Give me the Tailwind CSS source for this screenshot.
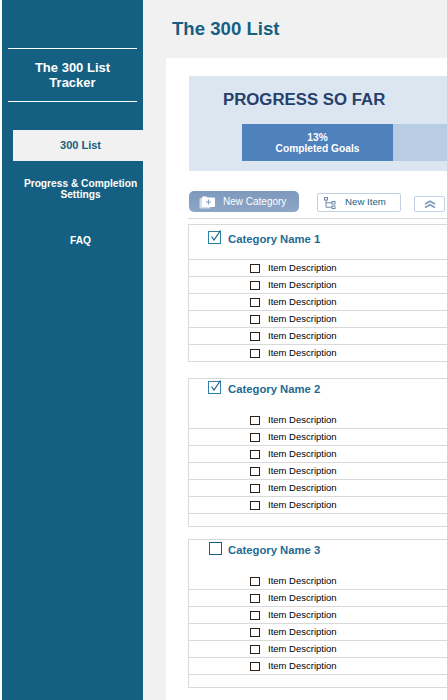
<!DOCTYPE html>
<html lang="en">
<head>
<meta charset="UTF-8">
<meta name="viewport" content="width=device-width,initial-scale=1">
<title>The 300 List</title>
<script src="https://cdn.jsdelivr.net/npm/@tailwindcss/browser@4"></script>
</head>
<body class="bg-white font-['Liberation_Sans',Arial,sans-serif]">
<div class="flex w-[447px] h-[700px] overflow-hidden pl-[2px]">

  <!-- sidebar -->
  <aside class="w-[141px] shrink-0 bg-[#155f82] text-white text-center">
    <div class="mx-[6px] mt-[48px] h-[54px] border-y border-white flex items-center justify-center pb-px text-[13px] leading-[15px] font-bold">The 300 List<br>Tracker</div>
    <div class="mt-[28px] ml-[11px] pl-[5px] h-[31px] bg-[#f1f1f1] text-[#155f82] text-[11px] font-bold flex items-center justify-center">300 List</div>
    <div class="mt-[17px] ml-[16px] text-[10.2px] leading-[11px] font-bold">Progress &amp; Completion<br>Settings</div>
    <div class="mt-[35px] ml-[16px] text-[10.2px] leading-[12px] font-bold">FAQ</div>
  </aside>

  <main class="flex-1 min-w-0 bg-[#f1f1f1]">
    <h1 class="h-[58px] pl-[29px] pt-[17px] text-[18.6px] leading-[23px] font-bold text-[#155f82]">The 300 List</h1>
    <div class="ml-[23px] bg-white h-[642px] pt-[18px] pl-[23px]">

      <!-- progress -->
      <section class="h-[95px] w-[280px] bg-[#dce6f1] pt-[15px]">
        <h2 class="pl-[34px] text-[16.8px] leading-[18px] font-bold text-[#24406b]">PROGRESS SO FAR</h2>
        <div class="ml-[53px] mt-[15px] flex h-[37px] bg-[#b8cce4]">
          <div class="w-[151px] bg-[#4f81bd] text-white text-center text-[10.2px] leading-[11px] font-bold pt-[8px]">13%<br>Completed Goals</div>
        </div>
      </section>

      <!-- toolbar -->
      <div class="mt-[20px] flex items-end h-[21px] w-[280px]">
        <button class="w-[110px] h-[21px] rounded-[5px] bg-linear-to-b from-[#7d99bd] to-[#8da6c6] text-white text-[10px] flex items-center pl-[10px] gap-[8px]">
          <svg width="16" height="14" viewBox="0 0 16 14" fill="none"><rect x="0.5" y="3" width="11" height="10.500" rx="1.5" fill="#d3dde9"/><path d="M3 2.500a1 1 0 0 1 1-1h3.500l1 1H15a1 1 0 0 1 1 1v7.500a1 1 0 0 1-1 1H4a1 1 0 0 1-1-1z" fill="#fff"/><path d="M9.500 4.500v5M7 7h5" stroke="#85a0c2" stroke-width="1.200"/></svg>
          New Category
        </button>
        <button class="ml-[18px] w-[84px] h-[19px] rounded-[2px] border border-[#c3d1e2] bg-white text-[#155f82] text-[9.7px] flex items-center pl-[6px] gap-[9px]">
          <svg width="12" height="12" viewBox="0 0 12 12" fill="none" stroke="#6b8aa8"><rect x="0.5" y="0.5" width="3" height="2.5"/><rect x="8" y="4.5" width="3" height="2.5"/><rect x="8" y="9" width="3" height="2.5"/><path d="M2 3v7.2h6M2 5.8h6"/></svg>
          New Item
        </button>
        <button class="ml-[13px] w-[31px] h-[16px] rounded-[2px] border border-[#c3d1e2] bg-white flex items-center justify-center shrink-0">
          <svg width="12" height="8" viewBox="0 0 12 8" fill="none" stroke="#7f9cbf" stroke-width="1.800"><path d="M1 4 6 1.200 11 4M1 7.500 6 4.700 11 7.500"/></svg>
        </button>
      </div>
      <div class="mt-[6px] -ml-px h-px w-[281px] bg-[#d9d9d9]"></div>

      <!-- category 1 -->
      <section class="mt-[5px] -ml-px w-[300px] border border-r-0 border-b-0 border-[#d9d9d9]">
        <div class="h-[34px] flex items-start pl-[19px] pt-[5px] gap-[6px]">
          <svg class="shrink-0" width="14" height="14" viewBox="0 0 14 14" fill="none"><rect x="0.500" y="1.500" width="12" height="12" stroke="#2f7fa8"/><path d="M3.500 6.500 6 10 12.500 0.500" stroke="#155f82" stroke-width="1.200"/></svg>
          <span class="mt-[2px] text-[11.3px] leading-[14px] font-bold text-[#1f6a94]">Category Name 1</span>
        </div>
        <ul class="border-t border-[#d9d9d9] text-[9.5px] text-black">
          <li class="h-[17px] border-b border-[#d9d9d9] flex items-center pl-[61px] gap-[8px]"><span class="w-[10px] h-[9px] border border-[#2a2018]"></span>Item Description</li>
          <li class="h-[17px] border-b border-[#d9d9d9] flex items-center pl-[61px] gap-[8px]"><span class="w-[10px] h-[9px] border border-[#2a2018]"></span>Item Description</li>
          <li class="h-[17px] border-b border-[#d9d9d9] flex items-center pl-[61px] gap-[8px]"><span class="w-[10px] h-[9px] border border-[#2a2018]"></span>Item Description</li>
          <li class="h-[17px] border-b border-[#d9d9d9] flex items-center pl-[61px] gap-[8px]"><span class="w-[10px] h-[9px] border border-[#2a2018]"></span>Item Description</li>
          <li class="h-[17px] border-b border-[#d9d9d9] flex items-center pl-[61px] gap-[8px]"><span class="w-[10px] h-[9px] border border-[#2a2018]"></span>Item Description</li>
          <li class="h-[17px] border-b border-[#d9d9d9] flex items-center pl-[61px] gap-[8px]"><span class="w-[10px] h-[9px] border border-[#2a2018]"></span>Item Description</li>
        </ul>
      </section>

      <!-- category 2 -->
      <section class="mt-[16px] -ml-px w-[300px] border border-r-0 border-b-0 border-[#d9d9d9]">
        <div class="h-[33px] flex items-start pl-[19px] pt-px gap-[6px]">
          <svg class="shrink-0" width="14" height="14" viewBox="0 0 14 14" fill="none"><rect x="0.500" y="1.500" width="12" height="12" stroke="#2f7fa8"/><path d="M3.500 6.500 6 10 12.500 0.500" stroke="#155f82" stroke-width="1.200"/></svg>
          <span class="mt-[2px] text-[11.3px] leading-[14px] font-bold text-[#1f6a94]">Category Name 2</span>
        </div>
        <ul class="text-[9.5px] text-black">
          <li class="h-[17px] border-b border-[#d9d9d9] flex items-center pl-[61px] gap-[8px]"><span class="w-[10px] h-[9px] border border-[#2a2018]"></span>Item Description</li>
          <li class="h-[17px] border-b border-[#d9d9d9] flex items-center pl-[61px] gap-[8px]"><span class="w-[10px] h-[9px] border border-[#2a2018]"></span>Item Description</li>
          <li class="h-[17px] border-b border-[#d9d9d9] flex items-center pl-[61px] gap-[8px]"><span class="w-[10px] h-[9px] border border-[#2a2018]"></span>Item Description</li>
          <li class="h-[17px] border-b border-[#d9d9d9] flex items-center pl-[61px] gap-[8px]"><span class="w-[10px] h-[9px] border border-[#2a2018]"></span>Item Description</li>
          <li class="h-[17px] border-b border-[#d9d9d9] flex items-center pl-[61px] gap-[8px]"><span class="w-[10px] h-[9px] border border-[#2a2018]"></span>Item Description</li>
          <li class="h-[17px] border-b border-[#d9d9d9] flex items-center pl-[61px] gap-[8px]"><span class="w-[10px] h-[9px] border border-[#2a2018]"></span>Item Description</li>
          <li class="h-[13px] border-b border-[#d9d9d9]"></li>
        </ul>
      </section>

      <!-- category 3 -->
      <section class="mt-[12px] -ml-px w-[300px] border border-r-0 border-b-0 border-[#d9d9d9]">
        <div class="h-[33px] flex items-start pl-[20px] pt-[2px] gap-[6px]">
          <span class="shrink-0 size-[13px] border border-[#155f82]"></span>
          <span class="mt-px text-[11.3px] leading-[14px] font-bold text-[#1f6a94]">Category Name 3</span>
        </div>
        <ul class="text-[9.5px] text-black">
          <li class="h-[17px] border-b border-[#d9d9d9] flex items-center pl-[61px] gap-[8px]"><span class="w-[10px] h-[9px] border border-[#2a2018]"></span>Item Description</li>
          <li class="h-[17px] border-b border-[#d9d9d9] flex items-center pl-[61px] gap-[8px]"><span class="w-[10px] h-[9px] border border-[#2a2018]"></span>Item Description</li>
          <li class="h-[17px] border-b border-[#d9d9d9] flex items-center pl-[61px] gap-[8px]"><span class="w-[10px] h-[9px] border border-[#2a2018]"></span>Item Description</li>
          <li class="h-[17px] border-b border-[#d9d9d9] flex items-center pl-[61px] gap-[8px]"><span class="w-[10px] h-[9px] border border-[#2a2018]"></span>Item Description</li>
          <li class="h-[17px] border-b border-[#d9d9d9] flex items-center pl-[61px] gap-[8px]"><span class="w-[10px] h-[9px] border border-[#2a2018]"></span>Item Description</li>
          <li class="h-[17px] border-b border-[#d9d9d9] flex items-center pl-[61px] gap-[8px]"><span class="w-[10px] h-[9px] border border-[#2a2018]"></span>Item Description</li>
          <li class="h-[13px] border-b border-[#d9d9d9]"></li>
        </ul>
      </section>
    </div>
  </main>
</div>
</body>
</html>
